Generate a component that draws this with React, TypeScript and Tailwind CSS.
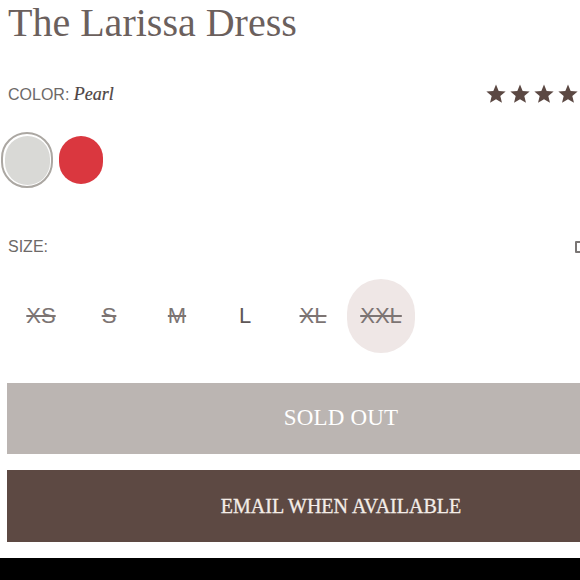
import React from 'react';

const sizes = [
  { label: 'XS', soldOut: true },
  { label: 'S', soldOut: true },
  { label: 'M', soldOut: true },
  { label: 'L', soldOut: false },
  { label: 'XL', soldOut: true },
  { label: 'XXL', soldOut: true, selected: true },
];

function Star() {
  return (
    <svg width="22" height="22" viewBox="0 0 24 24" className="shrink-0">
      <polygon
        points="12,1.5 14.9,8.6 22.5,9.2 16.7,14.2 18.5,21.6 12,17.6 5.5,21.6 7.3,14.2 1.5,9.2 9.1,8.6"
        fill="#5b4843"
      />
    </svg>
  );
}

export default function App() {
  return (
    <div className="w-[580px] h-[580px] overflow-hidden bg-white font-['Liberation_Sans',sans-serif]">
      {/* 标题 */}
      <h1 className="pl-2 text-[40px] leading-[45px] text-[#6b605d] font-['Liberation_Serif',serif] whitespace-nowrap">
        The Larissa Dress
      </h1>

      {/* 颜色 + 评分 */}
      <div className="mt-[39px] flex items-center justify-between w-[603px] pl-2 h-[20px]">
        <div className="text-[16px] leading-[20px] text-[#6d6968] whitespace-nowrap">
          COLOR:{' '}
          <span className="italic text-[18px] text-[#4d4443] font-['Liberation_Serif',serif] [-webkit-text-stroke:0.2px_#4d4443]">Pearl</span>
        </div>
        <div className="flex gap-[2px]">
          <Star />
          <Star />
          <Star />
          <Star />
          <Star />
        </div>
      </div>

      {/* 色块 */}
      <div className="mt-[28px] flex items-center gap-[6px] pl-px">
        <div className="w-[52px] h-[56px] rounded-full border-2 border-[#aba7a2] p-[1.5px] bg-white">
          <div className="w-full h-full rounded-full bg-[#d9d9d6]" />
        </div>
        <div className="w-[44px] h-[48px] rounded-full bg-[#da373f]" />
      </div>

      {/* 尺码 */}
      <div className="mt-[49px] flex items-center justify-between w-[591px] pl-2 h-[20px]">
        <span className="text-[16px] leading-[20px] text-[#6d6968]">SIZE:</span>
        <div className="w-[16px] h-[12px] border-2 border-[#7a7675] rounded-[1px]" />
      </div>

      <div className="mt-[22px] flex pl-[7px]">
        {sizes.map(s => (
          <div
            key={s.label}
            className={`w-[68px] h-[74px] flex items-center justify-center rounded-full ${s.selected ? 'bg-[#efe7e6]' : ''}`}
          >
            <span
              className={`text-[22px] leading-none ${s.soldOut ? 'text-[#7c7473] line-through decoration-[1.5px]' : 'text-[#5e5757]'}`}
            >
              {s.label}
            </span>
          </div>
        ))}
      </div>

      {/* 按钮 */}
      <div className="w-[668px] ml-[7px]">
        <div className="mt-[30px] h-[71px] bg-[#bbb5b2] flex items-center justify-center">
          <span className="text-[23px] text-white font-['Liberation_Serif',serif] tracking-[0.2px]">SOLD OUT</span>
        </div>
        <div className="mt-[16px] h-[72px] bg-[#5d4943] flex items-center justify-center">
          <span className="text-[20px] text-[#f4ede8] font-['Liberation_Serif',serif] [-webkit-text-stroke:0.3px_#f4ede8]">
            EMAIL WHEN AVAILABLE
          </span>
        </div>
      </div>

      <div className="mt-[16px] h-[30px] bg-black" />
    </div>
  );
}
